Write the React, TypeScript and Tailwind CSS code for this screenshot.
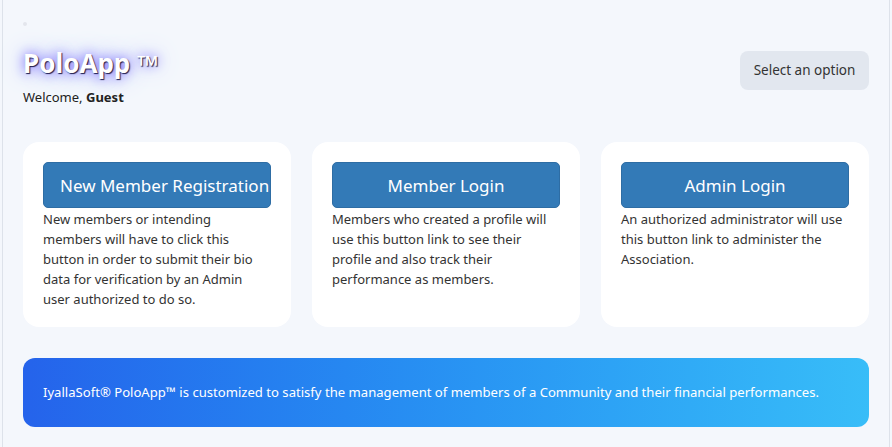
import React from 'react'

const cards = [
  {
    title: 'New Member Registration',
    text: 'New members or intending members will have to click this button in order to submit their bio data for verification by an Admin user authorized to do so.',
  },
  {
    title: 'Member Login',
    text: 'Members who created a profile will use this button link to see their profile and also track their performance as members.',
  },
  {
    title: 'Admin Login',
    text: 'An authorized administrator will use this button link to administer the Association.',
  },
]

const App: React.FC = () => {
  return (
    <div className="min-h-screen bg-[#f4f7fc] font-['Segoe_UI','Noto_Sans',sans-serif] text-[#333]">
      <div className="ml-[2px] mr-[2px] min-h-screen border-x border-[#dde2ea] px-[20px] pt-[22px] pb-5">
        {/* broken logo placeholder */}
        <div className="h-[4px] w-[4px] rounded-full bg-[#e3e6ec]" />

        {/* Header */}
        <div className="mt-[21px] flex items-start justify-between">
          <div>
            <h1 className="h-[32px] text-[26px] font-bold leading-[32px] text-white [text-shadow:1px_1px_1px_#1e1b4b,0_0_12px_#6d5dfc,0_0_26px_#a5b4fc]">
              PoloApp <span className="relative top-[3px] text-[28px] leading-[26px]">™</span>
            </h1>
            <p className="mt-[10px] text-[13px] leading-[16px] text-[#222]">
              Welcome, <strong className="font-bold">Guest</strong>
            </p>
          </div>
          <button className="mt-[4px] h-[39px] w-[129px] rounded-lg bg-[#e2e7ef] text-[13.5px] text-[#333]">
            Select an option
          </button>
        </div>

        {/* Cards */}
        <div className="mt-[37px] grid grid-cols-3 gap-[21px]">
          {cards.map((c) => (
            <div key={c.title} className="h-[185px] rounded-2xl bg-white px-5 pt-5">
              <button className="h-[46px] w-full rounded-[5px] border border-[#2e6da4] bg-[#337ab7] px-[16px] text-center text-[17px] leading-none text-white whitespace-nowrap">
                {c.title}
              </button>
              <p className="mt-[1px] text-[13px] leading-[20px] text-[#333]">{c.text}</p>
            </div>
          ))}
        </div>

        {/* Banner */}
        <div className="mt-[31px] flex h-[69px] items-center rounded-xl bg-gradient-to-r from-[#2563eb] to-[#38bdf8] px-5">
          <p className="text-[13.1px] text-white">
            IyallaSoft® PoloApp™ is customized to satisfy the management of members of a Community and their financial performances.
          </p>
        </div>
      </div>
    </div>
  )
}

export default App
